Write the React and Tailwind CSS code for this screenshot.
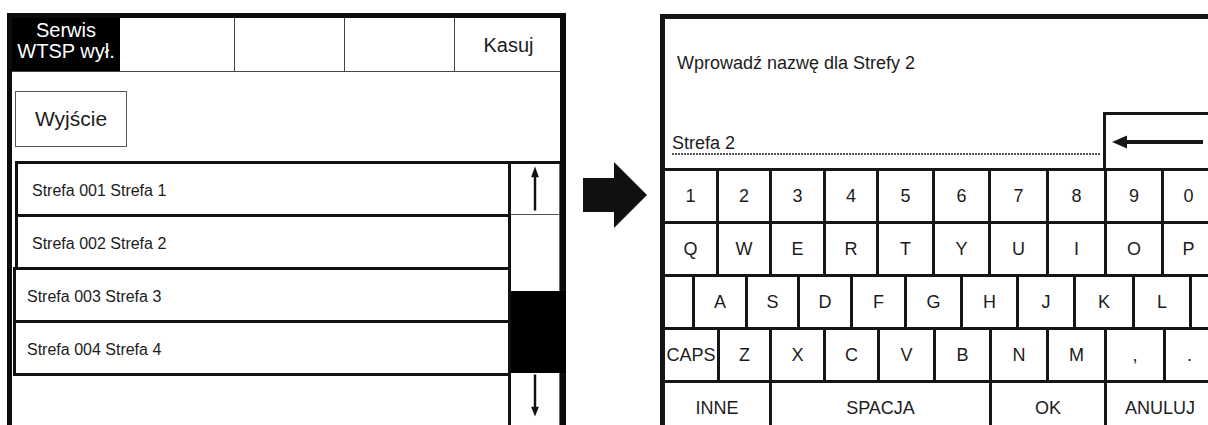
import React from 'react';

const font = "font-['Liberation_Sans',Arial,sans-serif]";

const zones = [
    { label: 'Strefa 001 Strefa 1', shift: 'ml-[2px] pl-[14px]' },
    { label: 'Strefa 002 Strefa 2', shift: 'ml-[2px] pl-[14px]' },
    { label: 'Strefa 003 Strefa 3', shift: 'pl-[11px]' },
    { label: 'Strefa 004 Strefa 4', shift: 'pl-[11px]' },
];

// widths include the 3px right border of each key; null = fill the rest
const keyRows = [
    [['1', 54], ['2', 53], ['3', 54], ['4', 53], ['5', 56], ['6', 56], ['7', 58], ['8', 58], ['9', 57], ['0', null]],
    [['Q', 54], ['W', 53], ['E', 54], ['R', 53], ['T', 56], ['Y', 56], ['U', 58], ['I', 58], ['O', 57], ['P', null]],
    [['', 30], ['A', 53], ['S', 52], ['D', 53], ['F', 54], ['G', 56], ['H', 56], ['J', 57], ['K', 59], ['L', 57], ['', null]],
    [['CAPS', 55], ['Z', 52], ['X', 54], ['C', 54], ['V', 56], ['B', 56], ['N', 57], ['M', 58], [',', 59], ['.', null]],
    [['INNE', 107], ['SPACJA', 220], ['OK', 115], ['ANULUJ', null]],
];

const Key = ({ label, width, last }) => (
    <div
        className={`h-full flex items-center justify-center text-[18px] text-[#1c1c1c] ${last ? 'flex-1' : 'shrink-0 border-r-[3px] border-[#161616]'}`}
        style={width ? { width } : undefined}
    >
        {label}
    </div>
);

const ZoneList = () => (
    <div className="mt-[14px] ml-[1px] flex">
        <div className="w-[495px] flex flex-col">
            {zones.map((z, i) => (
                <div
                    key={z.label}
                    className={`h-[56px] border-[3px] border-r-0 border-[#111] flex items-center pt-[3px] text-[16px] text-[#1c1c1c] ${z.shift} ${i > 0 ? '-mt-[3px]' : ''}`}
                >
                    {z.label}
                </div>
            ))}
        </div>
        <div className="w-[52px] border-l-[3px] border-t-[3px] border-[#111] flex flex-col">
            <div className="h-[51px] border-b border-[#555] border-r border-r-[#666] flex justify-center">
                <svg width="49" height="50" viewBox="0 0 49 50">
                    <polygon points="24.5,2 20.5,13 28.5,13" fill="#111" />
                    <line x1="24.5" y1="11" x2="24.5" y2="47" stroke="#111" strokeWidth="2.5" />
                </svg>
            </div>
            <div className="h-[76px] border-r border-[#666]" />
            <div className="h-[82px] bg-black -mr-[6px]" />
            <div className="h-[60px] border-r border-[#666] flex justify-center">
                <svg width="49" height="50" viewBox="0 0 49 50">
                    <line x1="24.5" y1="1" x2="24.5" y2="36" stroke="#111" strokeWidth="2.5" />
                    <polygon points="24.5,44 20.5,34 28.5,34" fill="#111" />
                </svg>
            </div>
        </div>
    </div>
);

const ZoneScreen = () => (
    <div className="ml-[7px] mt-[13px] w-[559px] h-[440px] shrink-0 border-t-[5px] border-l-[5px] border-r-[6px] border-[#0c0c0c] flex flex-col">
        <div className="h-[54px] flex border-b border-[#444]">
            <div className="w-[108px] bg-black text-white text-[20px] leading-[21px] flex flex-col items-center pt-[2px]">
                <span>Serwis</span>
                <span>WTSP wył.</span>
            </div>
            <div className="w-[115px] border-r border-[#444]" />
            <div className="w-[110px] border-r border-[#444]" />
            <div className="w-[110px] border-r border-[#444]" />
            <div className="flex-1 flex items-center justify-center text-[20px] text-[#1c1c1c] pl-[2px]">Kasuj</div>
        </div>

        <button className="mt-[19px] ml-[3px] w-[112px] h-[56px] border border-[#555] text-[21px] text-[#1c1c1c] flex items-center justify-center">
            Wyjście
        </button>

        <ZoneList />
    </div>
);

const NameKeyboard = () => (
    <div className="ml-[13px] mt-[14px] w-[553px] h-[440px] shrink-0 border-t-[5px] border-l-[5px] border-[#161616] flex flex-col">
        <div className="h-[149px] flex flex-col">
            <div className="pt-[33px] pl-[12px] text-[18px] leading-[22px] text-[#1c1c1c]">
                Wprowadź nazwę dla Strefy 2
            </div>
            <div className="mt-auto flex items-end">
                <div className="flex-1 pl-[7px] pr-[3px] pb-[13px]">
                    <div className="text-[18px] leading-[20px] text-[#1c1c1c]">Strefa 2</div>
                    <div className="h-[2px] bg-[repeating-linear-gradient(90deg,#555_0px,#555_2px,transparent_2px,transparent_3px)]" />
                </div>
                <div className="w-[110px] h-[56px] border-t-[3px] border-l-[3px] border-[#161616]">
                    <svg width="107" height="53" viewBox="0 0 107 53">
                        <polygon points="6,27 21,20.5 21,33.5" fill="#161616" />
                        <rect x="19" y="25" width="78" height="4" fill="#161616" />
                    </svg>
                </div>
            </div>
        </div>
        <div className="border-t-[3px] border-[#161616]">
            {keyRows.map((row, r) => (
                <div key={r} className="h-[53px] flex border-b-[3px] border-[#161616]">
                    {row.map(([label, width], i) => (
                        <Key key={i} label={label} width={width} last={i === row.length - 1} />
                    ))}
                </div>
            ))}
        </div>
    </div>
);

const App = () => {
    return (
        <div className={`w-[1208px] h-[425px] overflow-hidden bg-white flex items-start ${font}`}>
            <ZoneScreen />
            <svg className="ml-[17px] mt-[162px] shrink-0" width="64" height="66" viewBox="0 0 64 66">
                <polygon points="0,16 31,16 31,0 64,33 31,66 31,50 0,50" fill="#111" />
            </svg>
            <NameKeyboard />
        </div>
    );
};

export default App;
